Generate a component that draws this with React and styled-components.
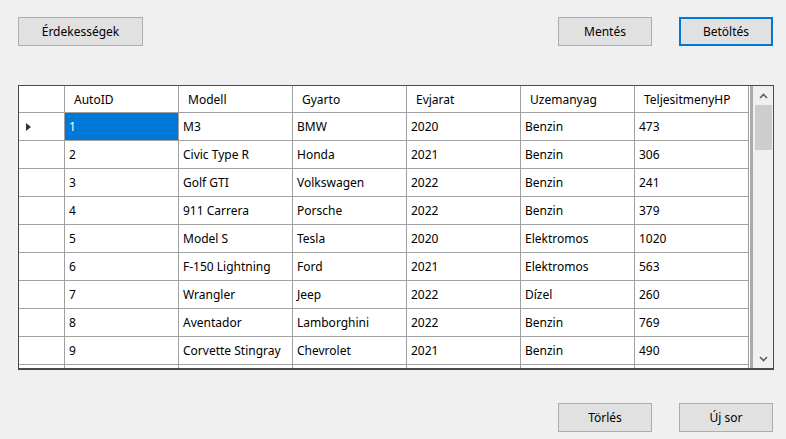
import React from 'react'
import styled, { createGlobalStyle } from 'styled-components'

const GlobalStyle = createGlobalStyle`
    html, body {
        margin: 0;
        padding: 0;
        background: #f0f0f0;
    }
    body {
        font-family: "Noto Sans", "Open Sans", sans-serif;
        font-size: 12px;
        color: #000;
    }
`

const Form = styled.div`
    width: 786px;
    height: 439px;
    box-sizing: border-box;
    padding: 17px 13px 0 18px;
    display: flex;
    flex-direction: column;
`

const ButtonRow = styled.div`
    display: flex;
    align-items: center;
    gap: 27px;
    margin-top: ${props => props.top || 0}px;
`

const Spacer = styled.div`
    flex: 1;
`

const Button = styled.button`
    width: ${props => props.w || 94}px;
    height: 29px;
    box-sizing: border-box;
    background: #e1e1e1;
    border: ${props => props.focused ? '2px solid #0078d7' : '1px solid #adadad'};
    font-family: inherit;
    font-size: 12px;
    color: #000;
    padding: 0;
    cursor: pointer;
`

const Grid = styled.div`
    margin-top: 39px;
    width: 756px;
    height: 285px;
    box-sizing: border-box;
    border: 1px solid #4a4a4a;
    border-bottom-width: 2px;
    background: #ababab;
    display: flex;
    overflow: hidden;
`

const Table = styled.div`
    width: 731px;
    display: flex;
    flex-direction: column;
    overflow: hidden;
`

const Row = styled.div`
    display: flex;
    flex: none;
    height: ${props => props.h}px;
    background: #fff;
`

const Cell = styled.div`
    width: ${props => props.w}px;
    flex: none;
    box-sizing: border-box;
    border-right: 1px solid #a0a0a0;
    border-bottom: 1px solid #a0a0a0;
    padding-left: ${props => props.pad}px;
    display: flex;
    align-items: center;
    white-space: nowrap;
    overflow: hidden;
    background: ${props => props.selected ? '#0078d7' : '#fff'};
    color: ${props => props.selected ? '#fff' : '#000'};
`

const Arrow = styled.div`
    width: 0;
    height: 0;
    margin-left: 7px;
    border-top: 4px solid transparent;
    border-bottom: 4px solid transparent;
    border-left: 5px solid #333;
`

const Gutter = styled.div`
    width: 3px;
    flex: none;
    background: #ababab;
`

const ScrollBar = styled.div`
    width: 20px;
    flex: none;
    background: #f0f0f0;
    display: flex;
    flex-direction: column;
    align-items: center;
`

const ScrollButton = styled.div`
    height: 19px;
    width: 100%;
    display: flex;
    align-items: center;
    justify-content: center;
    flex: none;
`

const Thumb = styled.div`
    width: 17px;
    height: 45px;
    background: #cdcdcd;
    flex: none;
`

const Track = styled.div`
    flex: 1;
`

const Chevron = ({ up }) => (
    <svg width="9" height="6" viewBox="0 0 9 6">
        <path d={up ? 'M1 5 L4.5 1.5 L8 5' : 'M1 1 L4.5 4.5 L8 1'} fill="none" stroke="#606060" strokeWidth="1.6" />
    </svg>
)

const columns = ['AutoID', 'Modell', 'Gyarto', 'Evjarat', 'Uzemanyag', 'TeljesitmenyHP']

const rows = [
    ['1', 'M3', 'BMW', '2020', 'Benzin', '473'],
    ['2', 'Civic Type R', 'Honda', '2021', 'Benzin', '306'],
    ['3', 'Golf GTI', 'Volkswagen', '2022', 'Benzin', '241'],
    ['4', '911 Carrera', 'Porsche', '2022', 'Benzin', '379'],
    ['5', 'Model S', 'Tesla', '2020', 'Elektromos', '1020'],
    ['6', 'F-150 Lightning', 'Ford', '2021', 'Elektromos', '563'],
    ['7', 'Wrangler', 'Jeep', '2022', 'Dízel', '260'],
    ['8', 'Aventador', 'Lamborghini', '2022', 'Benzin', '769'],
    ['9', 'Corvette Stingray', 'Chevrolet', '2021', 'Benzin', '490'],
    // next row only peeks in below the fold
    ['', '', '', '', '', ''],
]

const App = () => {
    return (
        <>
            <GlobalStyle />
            <Form>
                <ButtonRow>
                    <Button w={125}>Érdekességek</Button>
                    <Spacer />
                    <Button>Mentés</Button>
                    <Button focused>Betöltés</Button>
                </ButtonRow>
                <Grid>
                    <Table>
                        <Row h={27}>
                            <Cell w={46} />
                            {columns.map(c => (
                                <Cell key={c} w={114} pad={9}>{c}</Cell>
                            ))}
                        </Row>
                        {rows.map((r, i) => (
                            <Row key={i} h={28}>
                                <Cell w={46}>{i === 0 && <Arrow />}</Cell>
                                {r.map((v, j) => (
                                    <Cell key={j} w={114} pad={4} selected={i === 0 && j === 0}>{v}</Cell>
                                ))}
                            </Row>
                        ))}
                    </Table>
                    <Gutter />
                    <ScrollBar>
                        <ScrollButton><Chevron up /></ScrollButton>
                        <Thumb />
                        <Track />
                        <ScrollButton><Chevron /></ScrollButton>
                    </ScrollBar>
                </Grid>
                <ButtonRow top={33}>
                    <Spacer />
                    <Button>Törlés</Button>
                    <Button>Új sor</Button>
                </ButtonRow>
            </Form>
        </>
    )
}

export default App
